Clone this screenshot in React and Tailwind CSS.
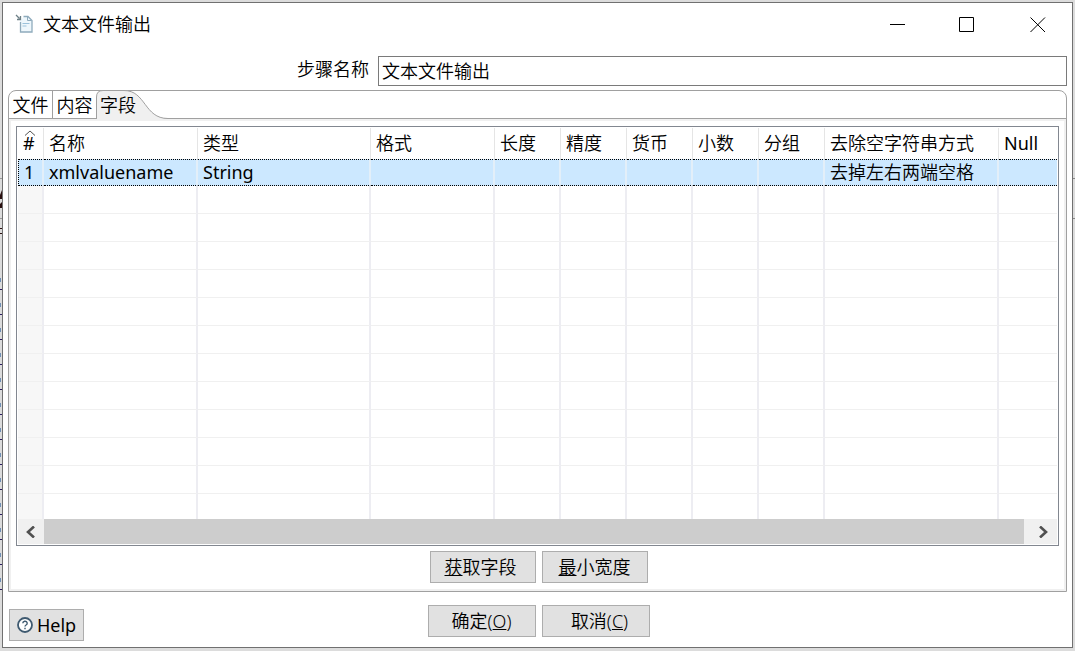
import React from "react";

const columns = [
  { label: "#", width: "w-[26px]", latin: true },
  { label: "名称", width: "w-[154px]" },
  { label: "类型", width: "w-[173px]" },
  { label: "格式", width: "w-[124px]" },
  { label: "长度", width: "w-[66px]" },
  { label: "精度", width: "w-[66px]" },
  { label: "货币", width: "w-[66px]" },
  { label: "小数", width: "w-[66px]" },
  { label: "分组", width: "w-[66px]" },
  { label: "去除空字符串方式", width: "w-[174px]" },
  { label: "Null", width: "", latin: true },
];

const record = ["1", "xmlvaluename", "String", "", "", "", "", "", "", "去掉左右两端空格", ""];
const emptyRows = Array.from({ length: 12 }, (_, i) => i);
const edgeMarks = Array.from({ length: 13 }, (_, i) => i);

function FileIcon() {
  return (
    <svg width="20" height="20" viewBox="0 0 20 20" fill="none" aria-hidden="true">
      <path d="M5 7v11h12V6l-4-3.500H9z" fill="#eef7fc" />
      <path d="M5.500 8v10h11.500V6.500l-4-4H8.500" stroke="#8fabbc" strokeWidth="1.300" />
      <path d="M12.500 2.500V6.500h4" stroke="#8fabbc" />
      <path d="M7.500 9.500h7M7.500 12h4" stroke="#9cc3dc" />
      <path d="M1 1l3.500 3.500M5.500 2v3.500H2" stroke="#6d7f86" strokeWidth="1.300" />
    </svg>
  );
}

function TitleBar() {
  return (
    <header className="flex h-[43px] items-center">
      <div className="flex flex-1 items-center gap-2 pb-0.5 pl-3">
        <FileIcon />
        <h1>文本文件输出</h1>
      </div>
      <button type="button" aria-label="Minimize" className="flex h-full w-[70px] items-center justify-center pl-0.5">
        <svg width="16" height="16" viewBox="0 0 16 16" stroke="#000"><path d="M0 7.500h15" /></svg>
      </button>
      <button type="button" aria-label="Maximize" className="flex h-full w-[70px] items-center justify-center">
        <svg width="16" height="16" viewBox="0 0 16 16" stroke="#000" fill="none"><path d="M.5.5h14v14h-14z" /></svg>
      </button>
      <button type="button" aria-label="Close" className="flex h-full w-[70px] items-center justify-center pl-0.5">
        <svg width="16" height="16" viewBox="0 0 16 16" stroke="#000"><path d="M.5.5l14.500 14.500M15 .5L.5 15" /></svg>
      </button>
    </header>
  );
}

function Tabs() {
  return (
    <div role="tablist" className="flex h-[28px] border-b border-[#a0a0a0]">
      <button type="button" role="tab" aria-selected="false" className="w-[44px] rounded-tl-md border-r border-[#a0a0a0]">文件</button>
      <button type="button" role="tab" aria-selected="false" className="w-[43px]">内容</button>
      <button type="button" role="tab" aria-selected="true" className="relative w-[72px] pl-1 text-left">
        <svg className="absolute -top-px left-0" width="72" height="29" viewBox="0 0 72 29" aria-hidden="true">
          <path d="M.5 29V7Q.5.5 7 .5H28C50 .5 48 28.500 72 28.500V29z" fill="#f0f0f0" />
          <path d="M.5 29V7Q.5.5 7 .5H28C50 .5 48 28.500 72 28.500" fill="none" stroke="#a0a0a0" />
        </svg>
        <span className="relative">字段</span>
      </button>
    </div>
  );
}

function FieldTable() {
  return (
    <table className="w-full table-fixed border-separate border-spacing-0">
      <thead>
        <tr className="h-[31px]">
          {columns.map((c, i) => (
            <th
              key={c.label}
              scope="col"
              className={`${c.width} ${c.latin ? "font-normal" : "font-[350]"} relative overflow-hidden p-0 pb-0.5 pl-[5px] text-left whitespace-nowrap ${i < columns.length - 1 ? "border-r border-[#e5e5e5]" : ""}`}
            >
              {i === 0 && (
                <svg className="absolute top-0.5 left-1.5" width="12" height="6" viewBox="0 0 12 6" fill="none" stroke="#555" aria-hidden="true">
                  <path d="M1 5.500l5-4.500 5 4.500" />
                </svg>
              )}
              {c.label}
            </th>
          ))}
        </tr>
      </thead>
      <tbody>
        <tr className="h-[27px] bg-[#cce8ff]">
          {record.map((v, i) => (
            <td
              key={columns[i].label}
              className={`border-y border-y-black [border-top-style:dotted] [border-bottom-style:dotted] p-0 pb-px pl-[5px] whitespace-nowrap ${i < 3 ? "font-normal" : ""} ${i === 0 ? "border-l border-l-black [border-left-style:dotted]" : ""} ${i < columns.length - 1 ? "border-r-2 border-r-[#e3eff9]" : ""}`}
            >
              {v}
            </td>
          ))}
        </tr>
        {emptyRows.map((r) => (
          <tr key={r} className="h-[28px] last:h-[25px]">
            {columns.map((c, i) => (
              <td
                key={c.label}
                className={`p-0 ${r < emptyRows.length - 1 ? "border-b border-b-[#f0f0f0]" : ""} ${i === 0 ? "bg-[#f7f7f7]" : ""} ${i < columns.length - 1 ? "border-r-2 border-r-[#ededf2]" : ""}`}
              />
            ))}
          </tr>
        ))}
      </tbody>
    </table>
  );
}

function ScrollBar() {
  return (
    <div className="flex h-[25px] bg-[#f0f0f0]">
      <button type="button" aria-label="Scroll left" className="flex w-[26px] items-center justify-center">
        <svg width="12" height="12" viewBox="0 0 12 12" fill="none" stroke="#505050" strokeWidth="2.600"><path d="M9 .5L3 6l6 5.500" /></svg>
      </button>
      <div className="flex-1 bg-[#cdcdcd]" />
      <button type="button" aria-label="Scroll right" className="flex w-[33px] items-center justify-center pl-1.5">
        <svg width="12" height="12" viewBox="0 0 12 12" fill="none" stroke="#505050" strokeWidth="2.600"><path d="M2 .5L8 6l-6 5.500" /></svg>
      </button>
    </div>
  );
}

function PushButton({ className, children }) {
  return (
    <button type="button" className={`flex h-8 items-center justify-center border border-[#adadad] bg-[#e1e1e1] ${className}`}>
      {children}
    </button>
  );
}

export default function App() {
  return (
    <div className="relative flex min-h-screen flex-col bg-[#dcdcdc] px-[2px] pt-[2px] pb-[3px] font-['Noto_Sans','Noto_Sans_CJK_SC',sans-serif] text-[18px] leading-6 font-[350] text-black">
      <svg className="absolute top-0 left-0" width="2" height="600" aria-hidden="true">
        <path d="M0 195l2-5v9H0zM0 204l2-2v6H0zM0 228h2v1H0zM0 233h2v1H0z" fill="#2a1010" />
        <path d="M0 178h2v1H0zM0 218h2v1H0z" fill="#999" />
        {edgeMarks.map((n) => (
          <g key={n}>
            <path d={`M0 ${278 + n * 25}h1v4H0z`} fill="#6f8fb5" />
            <path d={`M0 ${289 + n * 25}h2v1H0z`} fill="#2b1b60" />
          </g>
        ))}
      </svg>
      <svg className="absolute top-0 right-0" width="2" height="260" aria-hidden="true">
        <path d="M0 178h2v1H0zM0 218h2v1H0z" fill="#888" />
      </svg>
      <main className="flex flex-1 flex-col border border-[#707070] bg-white">
        <TitleBar />
        <div className="mt-[10px] mr-[5px] ml-1 flex h-[30px] items-center">
          <label htmlFor="step" className="w-[35%] pr-[9px] pb-1 text-right">步骤名称</label>
          <input id="step" defaultValue="文本文件输出" className="h-full min-w-0 flex-1 border border-[#7a7a7a] px-[3px] pb-0.5 outline-none" />
        </div>
        <section className="mx-[5px] mt-[4px] flex flex-1 flex-col rounded-t-lg border border-[#a0a0a0]">
          <Tabs />
          <div className="flex flex-1 flex-col border-2 border-[#f0f0f0] px-[5px] pt-[5px]">
            <div className="border border-[#828790] p-px">
              <FieldTable />
              <ScrollBar />
            </div>
            <div className="mt-[5px] flex justify-center gap-1.5 pb-1.5 pl-0.5">
              <PushButton className="w-[106px] pr-1"><span className="underline">获</span>取字段</PushButton>
              <PushButton className="w-[106px]"><span className="underline">最</span>小宽度</PushButton>
            </div>
          </div>
        </section>
        <footer className="grid grid-cols-[1fr_auto_1fr] pt-[13px] pr-1 pb-1.5 pl-1.5">
          <div className="pt-1">
            <PushButton className="w-[75px] gap-1 font-normal">
              <svg width="16" height="16" viewBox="0 0 16 16" fill="none" stroke="#3f5a70" aria-hidden="true">
                <circle cx="8" cy="8" r="7" fill="#fff" strokeWidth="1.800" />
                <path d="M5.800 6.300a2.200 2 0 1 1 3.300 1.700Q8 8.600 8 9.600M8 10.700v1.500" strokeWidth="1.400" />
              </svg>
              Help
            </PushButton>
          </div>
          <div className="flex gap-1.5">
            <PushButton className="w-[108px]">确定(<span className="underline">O</span>)</PushButton>
            <PushButton className="w-[108px] pl-2">取消(<span className="underline">C</span>)</PushButton>
          </div>
        </footer>
      </main>
    </div>
  );
}
